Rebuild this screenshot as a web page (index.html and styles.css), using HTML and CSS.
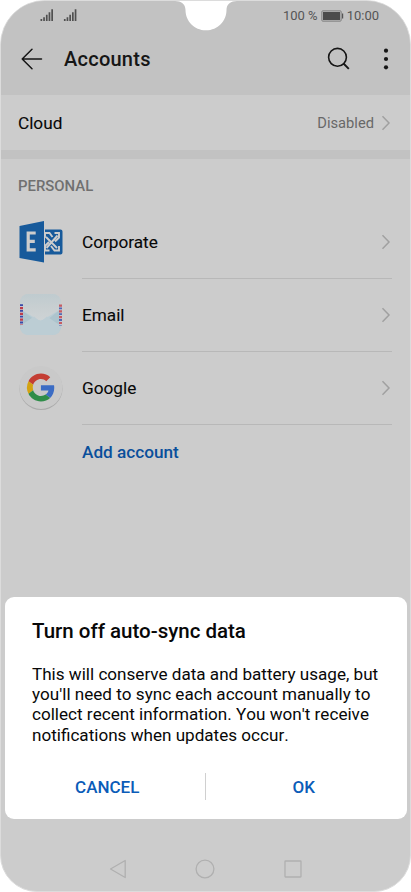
FILE: index.html
```html
<!DOCTYPE html>
<html lang="en">
<head>
<meta charset="utf-8">
<title>Accounts</title>
<link rel="stylesheet" href="styles.css">
</head>
<body>
<main class="phone">
  <header class="top">
    <svg class="notch" width="62" height="31" viewBox="0 0 62 31"><path fill="#fff" d="M0 0V1C6 1 10.500 4 10.500 10C10.500 21 19 30.300 31 30.300S51.500 21 51.500 10C51.500 4 56 1 62 1V0Z"/></svg>
    <div class="status">
      <svg class="signals" width="37" height="13" viewBox="0 0 37 13"><g id="sig" fill="#505050"><path d="M.500 10h1.700v2H.500zM3.200 8.300h1.700V12H3.200zM5.900 5.800h1.700V12H5.900zM8.600 3.300H10.300V12H8.600zM11.300.200h1.700V12h-1.700z"/></g><use href="#sig" x="23.400"/></svg>
      <div class="status-right">
        <span class="battery-text">100 %</span>
        <svg width="23" height="12" viewBox="0 0 23 12"><rect x=".8" y=".8" width="19.400" height="10.400" rx="1" fill="#b5b5b5" stroke="#858585"/><rect x="2" y="2" width="17" height="8" fill="#4c4c4c"/><path d="M21 3.500h1.200v5H21z" fill="#555"/></svg>
        <span class="clock">10:00</span>
      </div>
    </div>
    <div class="appbar">
      <svg width="22" height="22" viewBox="0 0 22 22" fill="none" stroke="#161616" stroke-width="1.500" stroke-linecap="round" stroke-linejoin="round"><path d="M20.500 11H1.200M11 1.200L1.200 11l9.800 9.800"/></svg>
      <h1>Accounts</h1>
      <svg class="search" width="24" height="24" viewBox="0 0 24 24" fill="none" stroke="#161616" stroke-width="1.600"><circle cx="10.500" cy="10.300" r="8.900"/><path d="M16.500 16.500l5.300 5.300" stroke-width="1.900"/></svg>
      <svg class="more" width="6" height="22" viewBox="0 0 6 22" fill="#161616"><circle cx="3" cy="2.700" r="2.100"/><circle cx="3" cy="11" r="2.100"/><circle cx="3" cy="19.300" r="2.100"/></svg>
    </div>
  </header>
  <div class="cloud">
    <span class="label">Cloud</span><span class="value">Disabled</span>
    <svg class="chev" width="10" height="16" viewBox="0 0 10 16"><path d="M1.500 1.300L8 8l-6.500 6.700"/></svg>
  </div>
  <section>
    <h2>PERSONAL</h2>
    <ul>
      <li>
        <svg class="icon" width="46" height="46" viewBox="0 0 46 46"><path fill="#175a9b" d="M1.500 7L26 2v41.500L1.500 39zM27 10.500h15.500q2 0 2 2v21q0 2-2 2H27z"/><path d="M17.700 14H10.200V30.800h7.500M10.200 22.300h6.600" fill="none" stroke="#cdcdcd" stroke-width="3.200"/><g fill="none" stroke="#cdcdcd" stroke-width="1.900"><path d="M27 18.500V14h4.500l3 4M36.500 14H41v4.500l-4 4M41 27v4.500h-4.500L33 27M31.500 31.500H27V27l4-4M28 18l11 11M39.500 16.500L28.500 29"/></g></svg>
        <div class="row"><span>Corporate</span><svg class="chev" width="10" height="16" viewBox="0 0 10 16"><path d="M1.500 1.300L8 8l-6.500 6.700"/></svg></div>
      </li>
      <li>
        <svg class="icon" width="46" height="46" viewBox="0 0 46 46"><defs><linearGradient id="flap" x2="0" y2="1"><stop stop-color="#bfcbcf"/><stop offset=".5" stop-color="#c8cfd1"/><stop offset="1" stop-color="#ced3d5"/></linearGradient></defs><rect x="2" y="2" width="41" height="41" rx="9" fill="#bacdd5"/><path d="M2 17l15 11L2 37zM43 17L29 28l14 9z" fill="#adc4cd"/><path d="M2 17v-6q0-9 9-9h23q9 0 9 9v6L25.500 27.500q-3 2.300-6 0z" fill="url(#flap)"/><path d="M2 34L16 24.500l3.500 3q3 2.300 6 0l3.500-3L43 34q0 9-9 9H11q-9 0-9-9z" fill="#bccdd4"/><g fill="none" stroke-width="3"><path d="M3.500 13v20M42.500 13v20" stroke="#c6c7d4"/><path d="M3.500 15v18" stroke="#bd3e4a" stroke-dasharray="2.200 3.600"/><path d="M3.500 12.200v21" stroke="#394aa6" stroke-dasharray="1.800 4"/><path d="M42.500 12.500v20" stroke="#c65b62" stroke-dasharray="2.200 3.600"/><path d="M42.500 15.500v18" stroke="#5269b1" stroke-dasharray="1.800 4"/></g></svg>
        <div class="row"><span>Email</span><svg class="chev" width="10" height="16" viewBox="0 0 10 16"><path d="M1.500 1.300L8 8l-6.500 6.700"/></svg></div>
      </li>
      <li>
        <svg class="icon" width="46" height="46" viewBox="0 0 46 46"><circle cx="23" cy="23.600" r="21.500" fill="#aaa"/><circle cx="23" cy="22.500" r="21.500" fill="#c9c9c9"/><g transform="translate(9 8.600) scale(.58)"><path fill="#c43e34" d="M24 9.500c3.540 0 6.710 1.220 9.210 3.600l6.850-6.850C35.900 2.380 30.470 0 24 0 14.620 0 6.510 5.380 2.560 13.220l7.980 6.190C12.430 13.720 17.740 9.500 24 9.500z"/><path fill="#3b6cc4" d="M46.980 24.550c0-1.570-.15-3.090-.38-4.550H24v9.020h12.940c-.58 2.960-2.260 5.480-4.780 7.180l7.730 6c4.510-4.180 7.090-10.360 7.090-17.650z"/><path fill="#d3a211" d="M10.530 28.590A14.500 14.500 0 0 1 10.530 19.410L2.560 13.220a24 24 0 0 0 0 21.560z"/><path fill="#2f8d49" d="M24 48c6.480 0 11.930-2.130 15.890-5.810l-7.730-6c-2.150 1.450-4.920 2.300-8.160 2.300-6.260 0-11.570-4.220-13.470-9.910l-7.970 6.200C6.510 42.620 14.620 48 24 48z"/></g></svg>
        <div class="row"><span>Google</span><svg class="chev" width="10" height="16" viewBox="0 0 10 16"><path d="M1.500 1.300L8 8l-6.500 6.700"/></svg></div>
      </li>
    </ul>
    <a class="add">Add account</a>
  </section>
  <nav>
    <svg width="18" height="20" viewBox="0 0 18 20"><path d="M16.200 1.500v17L1.500 10z"/></svg>
    <svg width="20" height="20" viewBox="0 0 20 20"><circle cx="10" cy="10" r="8.900"/></svg>
    <svg width="18" height="18" viewBox="0 0 18 18"><rect x="1" y="1" width="16" height="16" rx=".5"/></svg>
  </nav>
  <div class="dialog" role="dialog">
    <h3>Turn off auto-sync data</h3>
    <p>This will conserve data and battery usage, but<br>you'll need to sync each account manually to<br>collect recent information. You won't receive<br>notifications when updates occur.</p>
    <div class="actions"><button>CANCEL</button><button>OK</button></div>
  </div>
</main>
</body>
</html>
```
FILE: styles.css
```css
* { box-sizing: border-box; }
body { margin: 0; background: #fff; font-family: Roboto, sans-serif; color: #080808; }
svg { display: block; flex: none; }
h1, h2, h3, p, ul { margin: 0; padding: 0; font-weight: 500; }
.phone {
  position: relative; width: 411px; height: 892px; overflow: hidden;
  display: flex; flex-direction: column;
  background: #ccc; border: 1px solid #dcdcdc; border-radius: 45px 45px 37px 37px;
}
.top { height: 94px; background: #c2c2c2; flex: none; }
.notch { position: absolute; left: 173.500px; top: -1px; }
.status { height: 30px; padding: 0 31px 1px 39px; display: flex; justify-content: space-between; align-items: center; }
.status-right { display: flex; align-items: center; color: #555; font-size: 13px; }
.battery-text { margin-right: 3px; }
.clock { margin-left: 3px; }
.appbar { height: 56px; padding: 0 21px 0 20px; display: flex; align-items: center; }
h1 { font-size: 20px; letter-spacing: .25px; margin-left: 21px; color: #161616; }
.search { margin-left: auto; margin-right: 32.500px; }
.cloud { height: 64px; flex: none; padding: 0 19px 0 17px; display: flex; align-items: center; border-bottom: 9px solid #c2c2c2; }
.label, .row span { font-size: 17.200px; font-weight: 400; -webkit-text-stroke: .1px; }
.value { margin-left: auto; margin-right: 7px; font-size: 14.700px; color: #686868; }
.chev { fill: none; stroke: #a0a0a0; stroke-width: 1.500; }
h2 { margin: 18px 0 0 17px; height: 28.700px; line-height: 19px; font-size: 14.900px; color: #707070; }
ul { list-style: none; }
li { display: flex; align-items: center; height: 73px; padding: 0 18px 0 17px; }
.icon { margin-top: -1px; }
.row { flex: 1; height: 100%; margin-left: 18px; padding: 1px 1px 0 0; display: flex; justify-content: space-between; align-items: center; border-bottom: 1px solid #b8b8b8; }
.add { display: block; margin: 17px 0 0 81px; font-size: 17.200px; font-weight: 500; color: #094f9b; }
nav { margin-top: auto; height: 44px; flex: none; padding: 0 108.500px 0 107.500px; display: flex; justify-content: space-between; align-items: center; fill: none; stroke: #b0b0b0; stroke-width: 1.300; stroke-linejoin: round; }
.dialog { position: absolute; left: 3.500px; top: 596px; width: 402px; height: 222px; padding: 21px 0 0 27.500px; background: #fff; border-radius: 9px; }
h3 { font-size: 20.500px; line-height: 26px; }
p { margin-top: 20px; font-size: 17.100px; line-height: 20.200px; font-weight: 400; white-space: nowrap; font-kerning: none; }
.actions { display: flex; height: 27px; margin: 28px 0 0 -27.500px; }
button { flex: 1; border: 0; background: none; padding: 2px 0 0 5px; color: #0b5cb8; font: 500 17px Roboto, sans-serif; }
button + button { border-left: 1px solid #d0d0d0; padding: 2px 5px 0 0; }
```
